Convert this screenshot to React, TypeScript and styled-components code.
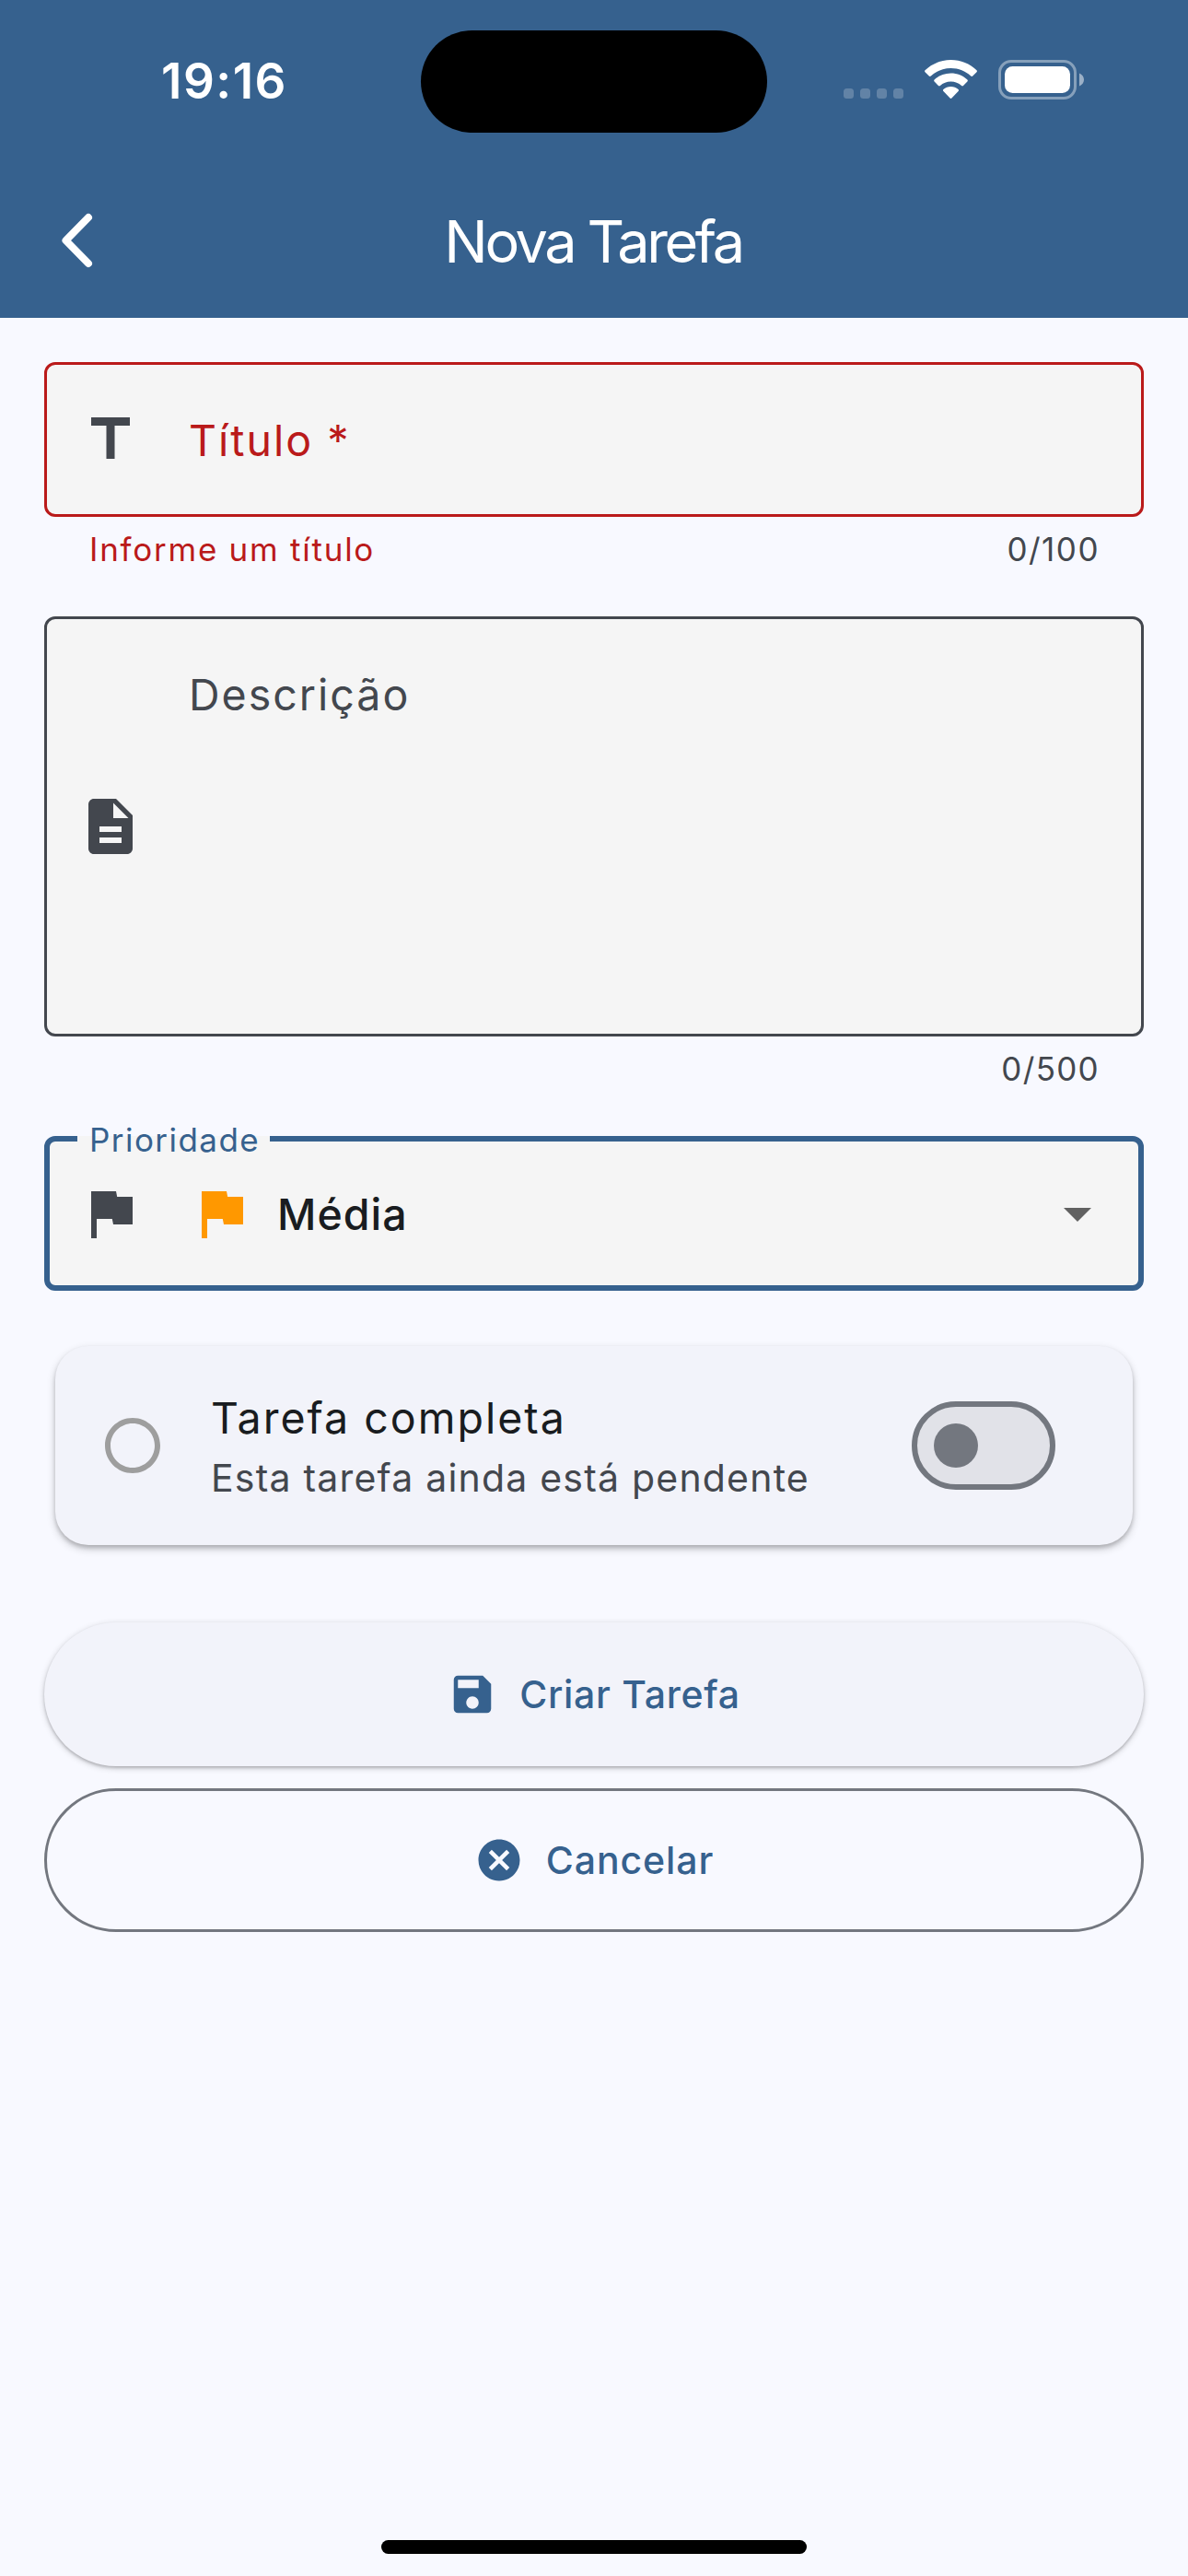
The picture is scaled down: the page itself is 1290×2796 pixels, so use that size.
import React from "react";
import styled, { createGlobalStyle } from "styled-components";
import {
  MdTitle,
  MdDescription,
  MdFlag,
  MdArrowDropDown,
  MdRadioButtonUnchecked,
  MdSave,
  MdCancel,
} from "react-icons/md";

const color = {
  primary: "#36618e",
  surface: "#f8f9ff",
  surfaceLow: "#f2f3fa",
  surfaceHighest: "#e1e2e8",
  field: "#f5f5f5",
  onSurface: "#191c20",
  onSurfaceVariant: "#43474e",
  outline: "#73777f",
  error: "#ba1a1a",
  orange: "#ff9800",
};

const GlobalStyle = createGlobalStyle`
  *, *::before, *::after { box-sizing: border-box; }
  body { margin: 0; background: ${color.surface}; }
`;

const Screen = styled.div`
  display: flex;
  flex-direction: column;
  width: 1290px;
  height: 2796px;
  overflow: hidden;
  background: ${color.surface};
  color: ${color.onSurface};
  font-family: Inter, Roboto, "Liberation Sans", sans-serif;

  svg {
    display: block;
    flex: none;
  }
`;

const Header = styled.header`
  flex: none;
  height: 345px;
  background: ${color.primary};
  color: #fff;
`;

const StatusBar = styled.div`
  display: grid;
  grid-template-columns: 457px 376px 457px;
  align-items: center;
  height: 177px;
`;

const Island = styled.div`
  height: 111px;
  border-radius: 56px;
  background: #000;
`;

const StatusIcons = styled.div`
  display: flex;
  align-items: flex-end;
  gap: 23px;
  height: 43px;
  margin-bottom: 4px;
  padding-left: 83px;
`;

const NavBar = styled.div`
  display: grid;
  grid-template-columns: 168px 1fr 168px;
  align-items: center;
  height: 168px;
`;

const BackButton = styled.button`
  display: flex;
  align-items: center;
  height: 168px;
  padding: 0 0 0 64px;
  border: 0;
  background: none;
  color: inherit;
`;

const Text = styled.span<{
  $size: number;
  $spacing?: number;
  $weight?: number;
  $color?: string;
}>`
  white-space: nowrap;
  font-size: ${(p) => p.$size}px;
  line-height: 1.25;
  font-weight: ${(p) => p.$weight ?? 400};
  letter-spacing: ${(p) => p.$spacing ?? 0}px;
  color: ${(p) => p.$color ?? "inherit"};
`;

const Clock = styled(Text)`
  padding-left: 175px;
`;

const Title = styled(Text)`
  justify-self: center;
  padding: 2px 2px 0 0;
`;

const Form = styled.main`
  display: flex;
  flex: 1;
  flex-direction: column;
  padding: 48px 48px 0;
`;

const Field = styled.div<{ $line: string; $width?: number; $height?: number }>`
  position: relative;
  display: flex;
  align-items: center;
  gap: 48px;
  height: ${(p) => p.$height ?? 168}px;
  padding: 0 ${(p) => 36 - (p.$width ?? 3)}px;
  border: ${(p) => p.$width ?? 3}px solid ${(p) => p.$line};
  border-radius: 12px;
  background: ${color.field};
  color: ${color.onSurfaceVariant};
`;

const FieldLabel = styled.div<{ $top?: boolean }>`
  display: flex;
  align-self: ${(p) => (p.$top ? "flex-start" : "center")};
  padding-top: ${(p) => (p.$top ? 53 : 2)}px;
  padding-left: 1px;
`;

const Helper = styled.div`
  display: flex;
  justify-content: space-between;
  height: 60px;
  margin-bottom: 48px;
  padding: 14px 48px 0 49px;
`;

const Notch = styled.div`
  position: absolute;
  top: -6px;
  left: 30px;
  display: flex;
  align-items: center;
  width: 209px;
  height: 6px;
  padding: 3px 0 0 13px;
  background: ${color.field};
`;

const SelectValue = styled.div`
  display: flex;
  flex: 1;
  align-items: center;
  gap: 25px;
`;

const SelectText = styled(Text)`
  padding-top: 2px;
`;

const Card = styled.section`
  display: flex;
  align-items: center;
  height: 216px;
  margin: 60px 12px 84px;
  padding: 0 84px 0 48px;
  border-radius: 36px;
  background: ${color.surfaceLow};
  box-shadow: 0 3px 4px rgba(0, 0, 0, 0.16), 0 4px 10px rgba(0, 0, 0, 0.2);
`;

const CardText = styled.div`
  display: flex;
  flex: 1;
  flex-direction: column;
  gap: 11px;
  padding: 2px 0 0 49px;
`;

const Switch = styled.div`
  display: flex;
  align-items: center;
  width: 156px;
  height: 96px;
  padding-left: 18px;
  border: 6px solid ${color.outline};
  border-radius: 48px;
  background: ${color.surfaceHighest};
`;

const Thumb = styled.div`
  width: 48px;
  height: 48px;
  border-radius: 50%;
  background: ${color.outline};
`;

const Button = styled.button<{ $outlined?: boolean }>`
  display: flex;
  align-items: center;
  justify-content: center;
  gap: 24px;
  height: 156px;
  margin: 0 0 24px;
  padding: 0;
  border: ${(p) => (p.$outlined ? `3px solid ${color.outline}` : "0")};
  border-radius: 78px;
  background: ${(p) => (p.$outlined ? "transparent" : color.surfaceLow)};
  box-shadow: ${(p) =>
    p.$outlined ? "none" : "0 2px 3px rgba(0, 0, 0, 0.16), 0 2px 7px rgba(0, 0, 0, 0.2)"};
  color: ${color.primary};
  font-family: inherit;
`;

const ButtonText = styled(Text)`
  padding-top: 2px;
`;

const HomeIndicator = styled.div`
  flex: none;
  align-self: center;
  width: 462px;
  height: 15px;
  margin-bottom: 24px;
  border-radius: 8px;
  background: #000;
`;

const SignalDots = () => (
  <svg width="65" height="12" viewBox="0 0 65 12" fill="#fff" fillOpacity="0.22">
    {[0, 18, 36, 54].map((x) => (
      <rect key={x} x={x} y="0" width="11" height="11" rx="3.5" />
    ))}
  </svg>
);

const Wifi = () => (
  <svg width="57" height="43" viewBox="0 0 57 43" fill="#fff">
    <path d="M28.5 0C39.3 0 49.2 4.2 56.5 11.2c.6.6.6 1.4 0 2l-4.3 4.3c-.6.6-1.4.6-2 0C44.5 12.2 36.9 9 28.5 9S12.5 12.2 6.8 17.5c-.6.6-1.4.6-2 0L.5 13.200c-.6-.6-.6-1.400 0-2C7.800 4.200 17.700 0 28.500 0z" />
    <path d="M28.5 14.5c6.9 0 13.2 2.6 17.9 7 .6.6.6 1.4 0 2L42 28c-.6.6-1.3.6-1.9 0-3.1-2.8-7.2-4.5-11.6-4.5S20 25.2 16.900 28c-.6.6-1.300.6-1.900 0l-4.400-4.500c-.6-.6-.6-1.400 0-2 4.700-4.400 11-7 17.900-7z" />
    <path d="M28.5 29c3.1 0 5.9 1.1 8.1 3 .6.5.6 1.4 0 2l-7.2 7.5c-.5.5-1.3.5-1.8 0L20.400 34c-.6-.6-.6-1.500 0-2 2.200-1.900 5-3 8.100-3z" />
  </svg>
);

const Battery = () => (
  <svg width="94" height="43" viewBox="0 0 94 43" fill="none">
    <rect x="1.5" y="1.5" width="82" height="40" rx="12.5" stroke="#fff" strokeOpacity="0.4" strokeWidth="3" />
    <path d="M88 14.5c3 1.2 5 4 5 7s-2 5.800-5 7z" fill="#fff" fillOpacity="0.5" />
    <rect x="7" y="7" width="71" height="29" rx="8.5" fill="#fff" />
  </svg>
);

const BackChevron = () => (
  <svg width="40" height="64" viewBox="0 0 40 64" fill="none">
    <path d="M32 7 7.500 32 32 57" stroke="#fff" strokeWidth="8" strokeLinecap="round" strokeLinejoin="round" />
  </svg>
);

export default function App() {
  return (
    <>
      <GlobalStyle />
      <Screen>
        <Header>
          <StatusBar>
            <Clock $size={53} $weight={600} $spacing={1.5}>19:16</Clock>
            <Island />
            <StatusIcons>
              <SignalDots />
              <Wifi />
              <Battery />
            </StatusIcons>
          </StatusBar>
          <NavBar>
            <BackButton aria-label="Voltar">
              <BackChevron />
            </BackButton>
            <Title $size={63} $spacing={-3.4}>Nova Tarefa</Title>
          </NavBar>
        </Header>

        <Form>
          <Field $line={color.error}>
            <MdTitle size={72} />
            <FieldLabel>
              <Text $size={46.5} $spacing={2} $color={color.error}>Título *</Text>
            </FieldLabel>
          </Field>
          <Helper>
            <Text $size={35} $spacing={1.75} $color={color.error}>Informe um título</Text>
            <Text $size={35} $spacing={1.5} $color={color.onSurfaceVariant}>0/100</Text>
          </Helper>

          <Field $line={color.onSurfaceVariant} $height={456}>
            <MdDescription size={72} />
            <FieldLabel $top>
              <Text $size={46.5} $spacing={2}>Descrição</Text>
            </FieldLabel>
          </Field>
          <Helper>
            <span />
            <Text $size={35} $spacing={1.3} $color={color.onSurfaceVariant}>0/500</Text>
          </Helper>

          <Field $line={color.primary} $width={6}>
            <Notch>
              <Text $size={35} $spacing={1.45} $color={color.primary}>Prioridade</Text>
            </Notch>
            <MdFlag size={72} />
            <SelectValue>
              <MdFlag size={72} color={color.orange} />
              <SelectText $size={46.5} $weight={500} $spacing={1} $color={color.onSurface}>
                Média
              </SelectText>
            </SelectValue>
            <MdArrowDropDown size={72} color="#616161" />
          </Field>

          <Card>
            <MdRadioButtonUnchecked size={72} color="#9e9e9e" />
            <CardText>
              <Text $size={46.5} $spacing={2}>Tarefa completa</Text>
              <Text $size={41} $spacing={1.2} $color={color.onSurfaceVariant}>
                Esta tarefa ainda está pendente
              </Text>
            </CardText>
            <Switch role="switch" aria-checked="false">
              <Thumb />
            </Switch>
          </Card>

          <Button>
            <MdSave size={54} />
            <ButtonText $size={41} $weight={500} $spacing={0.7}>Criar Tarefa</ButtonText>
          </Button>
          <Button $outlined>
            <MdCancel size={54} />
            <ButtonText $size={41} $weight={500} $spacing={0.9}>Cancelar</ButtonText>
          </Button>
        </Form>
        <HomeIndicator />
      </Screen>
    </>
  );
}
